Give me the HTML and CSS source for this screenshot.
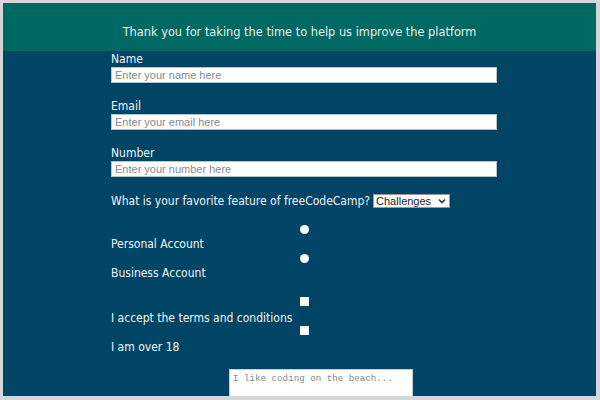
FILE: index.html
```html
<!DOCTYPE html>
<html lang="en">
<head>
<meta charset="utf-8">
<title>Survey Form</title>
<link rel="stylesheet" href="styles.css">
</head>
<body>
<div class="frame">
  <header class="hero">
    <h1 class="hero-title">Thank you for taking the time to help us improve the platform</h1>
  </header>
  <main class="content">
    <form class="survey">
      <label class="field">
        <span class="field-label">Name</span>
        <input class="text-input" type="text" placeholder="Enter your name here">
      </label>
      <label class="field">
        <span class="field-label">Email</span>
        <input class="text-input" type="email" placeholder="Enter your email here">
      </label>
      <label class="field">
        <span class="field-label">Number</span>
        <input class="text-input" type="text" placeholder="Enter your number here">
      </label>
      <div class="select-row">
        <span>What is your favorite feature of freeCodeCamp?</span>
        <span class="select-box">Challenges<svg class="chev" width="8" height="6" viewBox="0 0 8 6"><path d="M1 1.5 L4 4.5 L7 1.5" fill="none" stroke="#333" stroke-width="1.6"/></svg></span>
      </div>
      <div class="choice first-radio">
        <span class="dot"></span>
        <span class="choice-label">Personal Account</span>
      </div>
      <div class="choice">
        <span class="dot"></span>
        <span class="choice-label">Business Account</span>
      </div>
      <div class="choice first-check">
        <span class="box"></span>
        <span class="choice-label">I accept the terms and conditions</span>
      </div>
      <div class="choice">
        <span class="box"></span>
        <span class="choice-label">I am over 18</span>
      </div>
      <div class="comment-row">
        <textarea class="comments" placeholder="I like coding on the beach..."></textarea>
      </div>
    </form>
  </main>
</div>
</body>
</html>
```
FILE: styles.css
```css
html, body {
  margin: 0;
  padding: 0;
}
body {
  background: #d6d6d6;
  padding: 3px 4px 4px 3px;
  height: 400px;
  box-sizing: border-box;
}
.frame {
  height: 393px;
  overflow: hidden;
  background: #004466;
  font-family: "DejaVu Sans Condensed", "DejaVu Sans", sans-serif;
  color: #f2f5f7;
}
.hero {
  background: #006862;
  height: 48px;
  display: flex;
  align-items: center;
  justify-content: center;
  padding-top: 8px;
  box-sizing: border-box;
}
.hero-title {
  margin: 0;
  font-size: 12.65px;
  font-weight: normal;
  color: #e6f1ef;
}
.content {
  padding-left: 108px;
}
.survey {
  width: 386px;
  display: flex;
  flex-direction: column;
}
.field {
  display: flex;
  flex-direction: column;
  margin-bottom: 15px;
}
.field-label {
  font-size: 12px;
  line-height: 15px;
  height: 15px;
  margin-top: 1px;
}
.text-input {
  box-sizing: border-box;
  height: 16px;
  width: 386px;
  margin: 0;
  border: 1px solid #b8c4cc;
  padding: 0 3px;
  font-family: "Liberation Sans", Arial, sans-serif;
  font-size: 11px;
  background: #fff;
}
.text-input::placeholder {
  color: #8a8a8a;
}
.select-row {
  display: flex;
  align-items: center;
  font-size: 12px;
  height: 15px;
  margin-top: 1px;
}
.select-box {
  margin-left: 3px;
  box-sizing: border-box;
  width: 77px;
  height: 14px;
  background: #fff;
  border: 1px solid #999;
  color: #222;
  font-family: "Liberation Sans", Arial, sans-serif;
  font-size: 11px;
  display: flex;
  align-items: center;
  justify-content: space-between;
  padding: 0 3px 0 2px;
}
.chev {
  display: block;
}
.choice {
  display: flex;
  flex-direction: column;
  font-size: 12px;
}
.dot {
  width: 9px;
  height: 9px;
  border-radius: 50%;
  background: #fff;
  align-self: center;
  margin-top: 2px;
  margin-bottom: 3px;
}
.first-radio .dot {
  margin-top: 17px;
}
.box {
  width: 9px;
  height: 9px;
  background: #fff;
  align-self: center;
  margin-top: 0;
  margin-bottom: 5px;
}
.first-check .box {
  margin-top: 16px;
}
.choice-label {
  line-height: 15px;
}
.comment-row {
  margin-top: 14px;
  display: flex;
}
.comments {
  margin-left: 118px;
  width: 184px;
  height: 40px;
  box-sizing: border-box;
  border: 1px solid #ccc;
  padding: 3px 3px;
  resize: none;
  font-family: "Liberation Mono", "Courier New", monospace;
  font-size: 9.2px;
}
.comments::placeholder {
  color: #888;
}
```
